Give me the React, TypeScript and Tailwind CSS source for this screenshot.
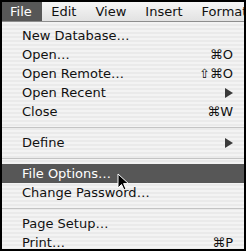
import React from "react";

const font = { fontFamily: '"DejaVu Sans", "Liberation Sans", sans-serif' };

function Arrow() {
  return (
    <svg width="8" height="10" viewBox="0 0 8 10" className="block">
      <path d="M0 0 L8 5 L0 10 Z" fill="#3a3a3a" />
    </svg>
  );
}

type Item = { label: string; sc?: React.ReactNode; sub?: boolean; hl?: boolean };

function Row({ label, sc, sub, hl }: Item) {
  return (
    <div
      className={`relative flex h-[19px] items-center justify-between pl-[20px] pr-[11px] ${
        hl ? "bg-[#575757] text-white" : "text-[#111]"
      }`}
    >
      <span className="leading-none">{label}</span>
      {sc && <span className="leading-none">{sc}</span>}
      {sub && <Arrow />}
      {hl && (
        <svg
          width="13"
          height="19"
          viewBox="0 0 13 19"
          className="absolute left-[115px] top-[9px]"
        >
          <path
            d="M1 1 L1 15 L4.5 11.5 L7 17 L9 16 L6.6 10.6 L11.5 10.6 Z"
            fill="#000"
            stroke="#fff"
            strokeWidth="1"
            strokeLinejoin="round"
          />
        </svg>
      )}
    </div>
  );
}

function Sep() {
  return (
    <div className="flex h-[12px] items-center">
      <div className="h-px w-full bg-[#c4c4c4]" />
    </div>
  );
}

export default function App() {
  return (
    <div
      className="h-[251px] w-[246px] overflow-hidden bg-black p-[2px] text-[13px]"
      style={font}
    >
      <div className="flex h-full flex-col overflow-hidden">
        <div className="flex h-[20px] shrink-0 items-center border-b border-[#8e8e8e] bg-[linear-gradient(to_bottom,#f6f6f6,#e2e2e2)] whitespace-nowrap text-[#111]">
          <div className="flex h-full items-center bg-[#575757] pl-[8px] pr-[10px] text-white">
            File
          </div>
          <div className="px-[9.5px]">Edit</div>
          <div className="px-[9.5px]">View</div>
          <div className="px-[9.5px]">Insert</div>
          <div className="px-[9.5px]">Format</div>
        </div>
        <div className="flex-1 bg-[repeating-linear-gradient(to_bottom,#f3f3f3_0px,#f3f3f3_2px,#eaeaea_2px,#eaeaea_4px)] pt-[4px]">
          <Row label="New Database…" />
          <Row label="Open…" sc="⌘O" />
          <Row label="Open Remote…" sc="⇧⌘O" />
          <Row label="Open Recent" sub />
          <Row label="Close" sc="⌘W" />
          <Sep />
          <Row label="Define" sub />
          <Sep />
          <Row label="File Options…" hl />
          <Row label="Change Password…" />
          <Sep />
          <Row label="Page Setup…" />
          <Row label="Print…" sc="⌘P" />
        </div>
      </div>
    </div>
  );
}
